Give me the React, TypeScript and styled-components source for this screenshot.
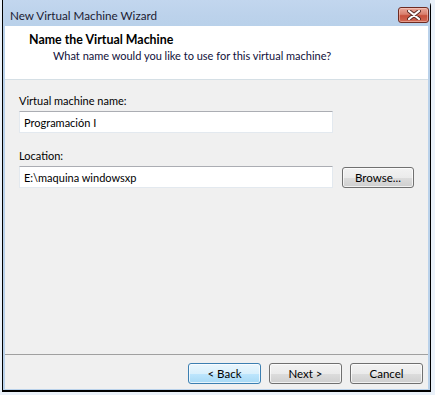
import React from 'react';
import styled, { createGlobalStyle } from 'styled-components';

const GlobalStyle = createGlobalStyle`
  html, body {
    margin: 0;
    padding: 0;
    background: #eaf1f9;
  }
  * {
    box-sizing: border-box;
  }
`;

const FONT = `Lato, 'Noto Sans', 'DejaVu Sans', sans-serif`;

const Desktop = styled.div`
  width: 435px;
  height: 395px;
  padding-left: 2px;
  overflow: hidden;
  font-family: ${FONT};
  font-size: 11px;
  color: #000;
`;

const Window = styled.div`
  width: 429px;
  height: 392px;
  border: 1px solid #000;
  border-top: none;
  border-bottom-width: 2px;
  border-top-right-radius: 6px;
  background: #b9d1ea;
  display: flex;
  flex-direction: column;
`;

const TitleBar = styled.div`
  height: 26px;
  flex-shrink: 0;
  display: flex;
  align-items: center;
  justify-content: space-between;
  padding: 4px 1px 0 7px;
  background: linear-gradient(to bottom, #c2d6ee 0%, #bcd2eb 60%, #b9d1ea 100%);
`;

const TitleText = styled.span`
  font-size: 11.7px;
  line-height: 16px;
  color: #1b1b33;
`;

const CloseButton = styled.button`
  width: 31px;
  height: 16px;
  padding: 0;
  border: 1px solid #6d2b22;
  border-radius: 3px;
  background: linear-gradient(to bottom, #e9a99b 0%, #d9806e 45%, #c7503c 55%, #d06a55 100%);
  box-shadow: inset 0 0 0 1px rgba(255, 220, 210, 0.45);
  display: flex;
  align-items: center;
  justify-content: center;
`;

const Client = styled.div`
  flex: 1;
  margin: 0 2px 1px;
  background: #f0f0f0;
  display: flex;
  flex-direction: column;
`;

const Header = styled.div`
  height: 54px;
  flex-shrink: 0;
  background: #fff;
  border-bottom: 1px solid #d5dfe5;
  padding: 6px 0 0 24px;
`;

const HeaderTitle = styled.div`
  font-weight: 700;
  font-size: 12.4px;
  line-height: 16px;
`;

const HeaderSub = styled.div`
  line-height: 16px;
  padding-left: 24px;
  color: #10103a;
`;

const Body = styled.div`
  flex: 1;
  padding: 13px 14px 0;
  display: flex;
  flex-direction: column;
  align-items: flex-start;
`;

const FieldLabel = styled.div<{ $gap?: number }>`
  line-height: 16px;
  margin-top: ${p => p.$gap ?? 0}px;
`;

const Row = styled.div`
  display: flex;
  align-items: flex-start;
  gap: 9px;
  margin-top: 2px;
`;

const TextInput = styled.input`
  width: 314px;
  height: 22px;
  margin: 2px 0 0;
  padding: 0 4px;
  border: 1px solid #e3e9ef;
  border-top-color: #abadb3;
  background: #fff;
  font-family: ${FONT};
  font-size: 11px;
  color: #000;
  outline: none;

  ${Row} & {
    margin-top: 0;
  }
`;

const PushButton = styled.button<{ $default?: boolean }>`
  width: 73px;
  height: 21px;
  padding: 0;
  border: 1px solid ${p => (p.$default ? '#3c7fb1' : '#707070')};
  border-radius: 3px;
  background: ${p =>
    p.$default
      ? 'linear-gradient(to bottom, #eaf6fd 0%, #d9f0fc 50%, #bee6fd 51%, #a7d9f5 100%)'
      : 'linear-gradient(to bottom, #f2f2f2 0%, #ebebeb 50%, #dddddd 51%, #cfcfcf 100%)'};
  box-shadow: inset 0 0 0 1px rgba(255, 255, 255, 0.7);
  font-family: ${FONT};
  font-size: 11.5px;
  color: #000;
  line-height: 19px;
`;

const BrowseButton = styled(PushButton)`
  width: 72px;
  margin-top: 1px;
`;

const Footer = styled.div`
  height: 35px;
  flex-shrink: 0;
  border-top: 1px solid #a0a0a0;
  display: flex;
  justify-content: flex-end;
  gap: 8px;
  padding: 8px 5px 0 0;
`;

const CloseGlyph: React.FC = () => (
  <svg width="14" height="10" viewBox="0 0 14 10">
    <path d="M2 1 L12 9 M12 1 L2 9" stroke="#5a2b26" strokeWidth="4" strokeLinecap="round" />
    <path d="M2 1 L12 9 M12 1 L2 9" stroke="#fff" strokeWidth="2.2" strokeLinecap="round" />
  </svg>
);

const App: React.FC = () => (
  <>
    <GlobalStyle />
    <Desktop>
      <Window>
        <TitleBar>
          <TitleText>New Virtual Machine Wizard</TitleText>
          <CloseButton title="Close">
            <CloseGlyph />
          </CloseButton>
        </TitleBar>
        <Client>
          <Header>
            <HeaderTitle>Name the Virtual Machine</HeaderTitle>
            <HeaderSub>What name would you like to use for this virtual machine?</HeaderSub>
          </Header>
          <Body>
            <FieldLabel>Virtual machine name:</FieldLabel>
            <TextInput defaultValue="Programación I" />
            <FieldLabel $gap={15}>Location:</FieldLabel>
            <Row>
              <TextInput defaultValue="E:\maquina windowsxp" />
              <BrowseButton>Browse...</BrowseButton>
            </Row>
          </Body>
          <Footer>
            <PushButton $default>&lt; Back</PushButton>
            <PushButton>Next &gt;</PushButton>
            <PushButton>Cancel</PushButton>
          </Footer>
        </Client>
      </Window>
    </Desktop>
  </>
);

export default App;
